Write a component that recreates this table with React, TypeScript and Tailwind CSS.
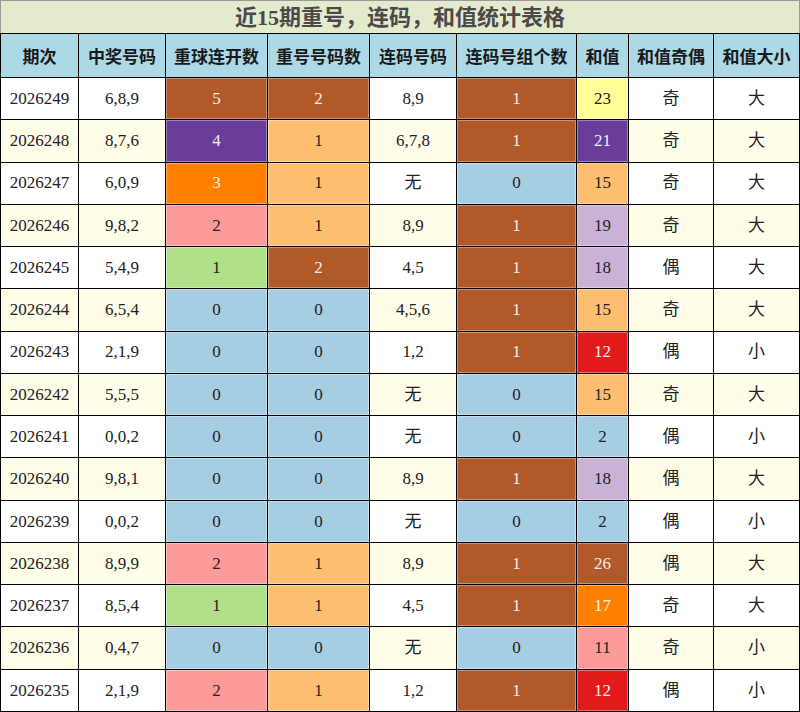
import React from 'react';

type Tone = 'brown' | 'purple' | 'orange' | 'pink' | 'green' | 'blue' | 'lorange' | 'yellow' | 'lav' | 'red';

const toneClass: Record<Tone, string> = {
  brown: 'bg-[#b15928] text-[#f6ece6]',
  purple: 'bg-[#6a3d9a] text-[#f1ecf6]',
  orange: 'bg-[#ff7f00] text-[#fff3e6]',
  red: 'bg-[#e31a1c] text-[#fdeeee]',
  pink: 'bg-[#fb9a99] text-[#222]',
  green: 'bg-[#b2df8a] text-[#222]',
  blue: 'bg-[#a6cee3] text-[#222]',
  lorange: 'bg-[#fdbf6f] text-[#222]',
  yellow: 'bg-[#ffff99] text-[#222]',
  lav: 'bg-[#cab2d6] text-[#222]',
};

interface Row {
  issue: string;
  draw: string;
  repeatRun: [string, Tone];
  repeatCount: [string, Tone];
  consec: string;
  consecGroups: [string, Tone];
  sum: [string, Tone];
  parity: string;
  size: string;
}

const rows: Row[] = [
  { issue: '2026249', draw: '6,8,9', repeatRun: ['5', 'brown'], repeatCount: ['2', 'brown'], consec: '8,9', consecGroups: ['1', 'brown'], sum: ['23', 'yellow'], parity: '奇', size: '大' },
  { issue: '2026248', draw: '8,7,6', repeatRun: ['4', 'purple'], repeatCount: ['1', 'lorange'], consec: '6,7,8', consecGroups: ['1', 'brown'], sum: ['21', 'purple'], parity: '奇', size: '大' },
  { issue: '2026247', draw: '6,0,9', repeatRun: ['3', 'orange'], repeatCount: ['1', 'lorange'], consec: '无', consecGroups: ['0', 'blue'], sum: ['15', 'lorange'], parity: '奇', size: '大' },
  { issue: '2026246', draw: '9,8,2', repeatRun: ['2', 'pink'], repeatCount: ['1', 'lorange'], consec: '8,9', consecGroups: ['1', 'brown'], sum: ['19', 'lav'], parity: '奇', size: '大' },
  { issue: '2026245', draw: '5,4,9', repeatRun: ['1', 'green'], repeatCount: ['2', 'brown'], consec: '4,5', consecGroups: ['1', 'brown'], sum: ['18', 'lav'], parity: '偶', size: '大' },
  { issue: '2026244', draw: '6,5,4', repeatRun: ['0', 'blue'], repeatCount: ['0', 'blue'], consec: '4,5,6', consecGroups: ['1', 'brown'], sum: ['15', 'lorange'], parity: '奇', size: '大' },
  { issue: '2026243', draw: '2,1,9', repeatRun: ['0', 'blue'], repeatCount: ['0', 'blue'], consec: '1,2', consecGroups: ['1', 'brown'], sum: ['12', 'red'], parity: '偶', size: '小' },
  { issue: '2026242', draw: '5,5,5', repeatRun: ['0', 'blue'], repeatCount: ['0', 'blue'], consec: '无', consecGroups: ['0', 'blue'], sum: ['15', 'lorange'], parity: '奇', size: '大' },
  { issue: '2026241', draw: '0,0,2', repeatRun: ['0', 'blue'], repeatCount: ['0', 'blue'], consec: '无', consecGroups: ['0', 'blue'], sum: ['2', 'blue'], parity: '偶', size: '小' },
  { issue: '2026240', draw: '9,8,1', repeatRun: ['0', 'blue'], repeatCount: ['0', 'blue'], consec: '8,9', consecGroups: ['1', 'brown'], sum: ['18', 'lav'], parity: '偶', size: '大' },
  { issue: '2026239', draw: '0,0,2', repeatRun: ['0', 'blue'], repeatCount: ['0', 'blue'], consec: '无', consecGroups: ['0', 'blue'], sum: ['2', 'blue'], parity: '偶', size: '小' },
  { issue: '2026238', draw: '8,9,9', repeatRun: ['2', 'pink'], repeatCount: ['1', 'lorange'], consec: '8,9', consecGroups: ['1', 'brown'], sum: ['26', 'brown'], parity: '偶', size: '大' },
  { issue: '2026237', draw: '8,5,4', repeatRun: ['1', 'green'], repeatCount: ['1', 'lorange'], consec: '4,5', consecGroups: ['1', 'brown'], sum: ['17', 'orange'], parity: '奇', size: '大' },
  { issue: '2026236', draw: '0,4,7', repeatRun: ['0', 'blue'], repeatCount: ['0', 'blue'], consec: '无', consecGroups: ['0', 'blue'], sum: ['11', 'pink'], parity: '奇', size: '小' },
  { issue: '2026235', draw: '2,1,9', repeatRun: ['2', 'pink'], repeatCount: ['1', 'lorange'], consec: '1,2', consecGroups: ['1', 'brown'], sum: ['12', 'red'], parity: '偶', size: '小' },
];

const headers = ['期次', '中奖号码', '重球连开数', '重号号码数', '连码号码', '连码号组个数', '和值', '和值奇偶', '和值大小'];

function Plain({ text, bg }: { text: string; bg: string }) {
  return <div className={`${bg} flex items-center justify-center text-[#222]`}>{text}</div>;
}

function Colored({ cell }: { cell: [string, Tone] }) {
  return (
    <div className={`${toneClass[cell[1]]} flex items-center justify-center shadow-[inset_0_0_0_1px_rgba(255,255,255,0.35)]`}>
      {cell[0]}
    </div>
  );
}

export default function App() {
  return (
    <div className="w-[800px] h-[712px] flex flex-col bg-white font-['Liberation_Serif','Noto_Sans_CJK_SC',serif] text-[17px]">
      <div className="h-[33px] shrink-0 border border-b-0 border-[#9a9a9a] bg-[#e4ebcd] flex items-center justify-center font-bold text-[22px] text-[#4a4a4a]">
        近15期重号，连码，和值统计表格
      </div>
      <div className="flex-1 grid grid-cols-[77px_86px_101px_101px_86px_119px_51px_84px_85px] grid-rows-[43px_repeat(15,1fr)] gap-px p-px bg-black">
        {headers.map((h) => (
          <div key={h} className="bg-[#add8e6] flex items-center justify-center font-bold text-[17px] text-[#1a1a1a] font-['Noto_Sans_CJK_SC',sans-serif]">
            {h}
          </div>
        ))}
        {rows.map((r, i) => {
          const bg = i % 2 === 0 ? 'bg-white' : 'bg-[#fffce8]';
          return (
            <React.Fragment key={r.issue}>
              <Plain text={r.issue} bg={bg} />
              <Plain text={r.draw} bg={bg} />
              <Colored cell={r.repeatRun} />
              <Colored cell={r.repeatCount} />
              <Plain text={r.consec} bg={bg} />
              <Colored cell={r.consecGroups} />
              <Colored cell={r.sum} />
              <Plain text={r.parity} bg={bg} />
              <Plain text={r.size} bg={bg} />
            </React.Fragment>
          );
        })}
      </div>
    </div>
  );
}
